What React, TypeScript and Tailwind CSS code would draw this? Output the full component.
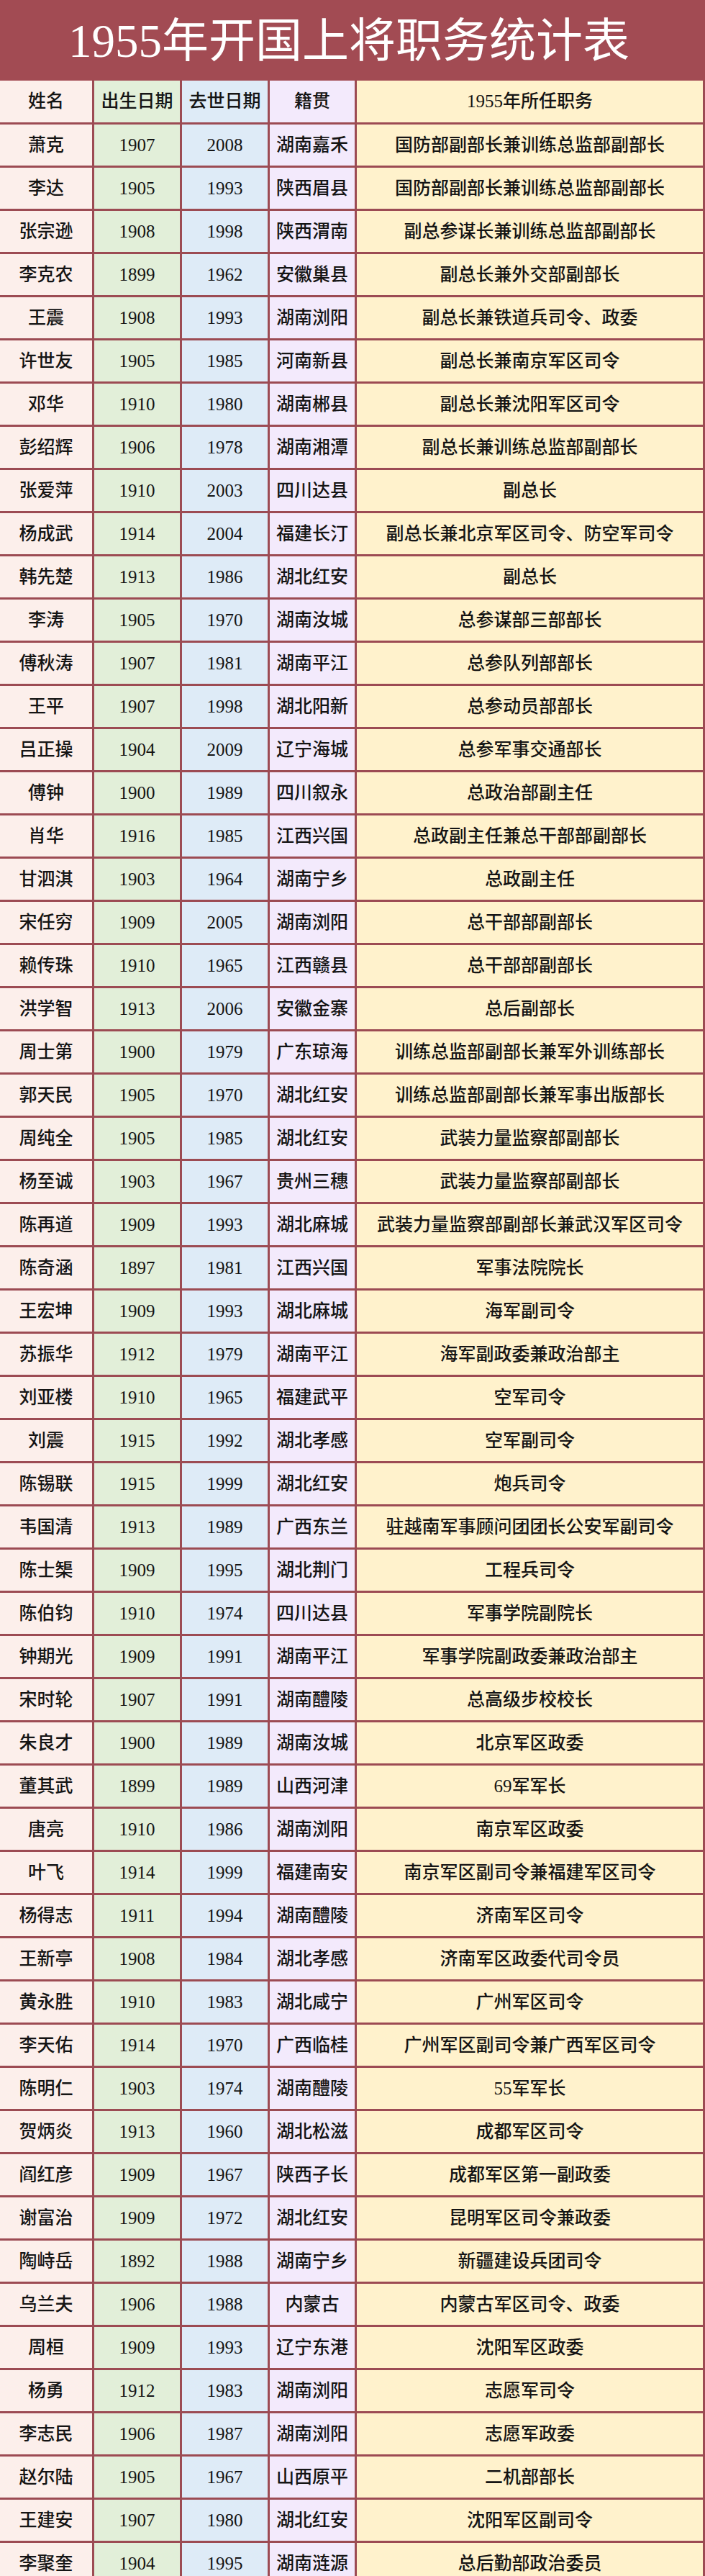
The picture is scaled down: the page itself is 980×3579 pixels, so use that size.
const rows: [string, string, string, string, string][] = [
  ['萧克', '1907', '2008', '湖南嘉禾', '国防部副部长兼训练总监部副部长'],
  ['李达', '1905', '1993', '陕西眉县', '国防部副部长兼训练总监部副部长'],
  ['张宗逊', '1908', '1998', '陕西渭南', '副总参谋长兼训练总监部副部长'],
  ['李克农', '1899', '1962', '安徽巢县', '副总长兼外交部副部长'],
  ['王震', '1908', '1993', '湖南浏阳', '副总长兼铁道兵司令、政委'],
  ['许世友', '1905', '1985', '河南新县', '副总长兼南京军区司令'],
  ['邓华', '1910', '1980', '湖南郴县', '副总长兼沈阳军区司令'],
  ['彭绍辉', '1906', '1978', '湖南湘潭', '副总长兼训练总监部副部长'],
  ['张爱萍', '1910', '2003', '四川达县', '副总长'],
  ['杨成武', '1914', '2004', '福建长汀', '副总长兼北京军区司令、防空军司令'],
  ['韩先楚', '1913', '1986', '湖北红安', '副总长'],
  ['李涛', '1905', '1970', '湖南汝城', '总参谋部三部部长'],
  ['傅秋涛', '1907', '1981', '湖南平江', '总参队列部部长'],
  ['王平', '1907', '1998', '湖北阳新', '总参动员部部长'],
  ['吕正操', '1904', '2009', '辽宁海城', '总参军事交通部长'],
  ['傅钟', '1900', '1989', '四川叙永', '总政治部副主任'],
  ['肖华', '1916', '1985', '江西兴国', '总政副主任兼总干部部副部长'],
  ['甘泗淇', '1903', '1964', '湖南宁乡', '总政副主任'],
  ['宋任穷', '1909', '2005', '湖南浏阳', '总干部部副部长'],
  ['赖传珠', '1910', '1965', '江西赣县', '总干部部副部长'],
  ['洪学智', '1913', '2006', '安徽金寨', '总后副部长'],
  ['周士第', '1900', '1979', '广东琼海', '训练总监部副部长兼军外训练部长'],
  ['郭天民', '1905', '1970', '湖北红安', '训练总监部副部长兼军事出版部长'],
  ['周纯全', '1905', '1985', '湖北红安', '武装力量监察部副部长'],
  ['杨至诚', '1903', '1967', '贵州三穗', '武装力量监察部副部长'],
  ['陈再道', '1909', '1993', '湖北麻城', '武装力量监察部副部长兼武汉军区司令'],
  ['陈奇涵', '1897', '1981', '江西兴国', '军事法院院长'],
  ['王宏坤', '1909', '1993', '湖北麻城', '海军副司令'],
  ['苏振华', '1912', '1979', '湖南平江', '海军副政委兼政治部主'],
  ['刘亚楼', '1910', '1965', '福建武平', '空军司令'],
  ['刘震', '1915', '1992', '湖北孝感', '空军副司令'],
  ['陈锡联', '1915', '1999', '湖北红安', '炮兵司令'],
  ['韦国清', '1913', '1989', '广西东兰', '驻越南军事顾问团团长公安军副司令'],
  ['陈士榘', '1909', '1995', '湖北荆门', '工程兵司令'],
  ['陈伯钧', '1910', '1974', '四川达县', '军事学院副院长'],
  ['钟期光', '1909', '1991', '湖南平江', '军事学院副政委兼政治部主'],
  ['宋时轮', '1907', '1991', '湖南醴陵', '总高级步校校长'],
  ['朱良才', '1900', '1989', '湖南汝城', '北京军区政委'],
  ['董其武', '1899', '1989', '山西河津', '69军军长'],
  ['唐亮', '1910', '1986', '湖南浏阳', '南京军区政委'],
  ['叶飞', '1914', '1999', '福建南安', '南京军区副司令兼福建军区司令'],
  ['杨得志', '1911', '1994', '湖南醴陵', '济南军区司令'],
  ['王新亭', '1908', '1984', '湖北孝感', '济南军区政委代司令员'],
  ['黄永胜', '1910', '1983', '湖北咸宁', '广州军区司令'],
  ['李天佑', '1914', '1970', '广西临桂', '广州军区副司令兼广西军区司令'],
  ['陈明仁', '1903', '1974', '湖南醴陵', '55军军长'],
  ['贺炳炎', '1913', '1960', '湖北松滋', '成都军区司令'],
  ['阎红彦', '1909', '1967', '陕西子长', '成都军区第一副政委'],
  ['谢富治', '1909', '1972', '湖北红安', '昆明军区司令兼政委'],
  ['陶峙岳', '1892', '1988', '湖南宁乡', '新疆建设兵团司令'],
  ['乌兰夫', '1906', '1988', '内蒙古', '内蒙古军区司令、政委'],
  ['周桓', '1909', '1993', '辽宁东港', '沈阳军区政委'],
  ['杨勇', '1912', '1983', '湖南浏阳', '志愿军司令'],
  ['李志民', '1906', '1987', '湖南浏阳', '志愿军政委'],
  ['赵尔陆', '1905', '1967', '山西原平', '二机部部长'],
  ['王建安', '1907', '1980', '湖北红安', '沈阳军区副司令'],
  ['李聚奎', '1904', '1995', '湖南涟源', '总后勤部政治委员'],
];

const colBg = ['bg-[#fcefeb]', 'bg-[#e2efd9]', 'bg-[#deebf7]', 'bg-[#f3eafc]', 'bg-[#fff2cc]'];

function Cell({ text, col, tall }: { text: string; col: number; tall?: boolean }) {
  return (
    <div
      className={`flex items-center justify-center whitespace-nowrap text-[25px] font-medium text-[#141414] ${colBg[col]} ${
        tall ? 'h-[58px]' : 'h-[57px]'
      }`}
    >
      {text}
    </div>
  );
}

export default function App() {
  const header = ['姓名', '出生日期', '去世日期', '籍贯', '1955年所任职务'];

  return (
    <div
      className="w-[980px] bg-[#9c4b53]"
      style={{ fontFamily: '"Liberation Serif", "Noto Sans CJK SC", serif' }}
    >
      {/* Title */}
      <div className="flex h-[112px] items-center justify-center bg-[#a24b53] pt-[2px] pr-[10px] text-[65px] leading-none text-white">
        1955年开国上将职务统计表
      </div>

      {/* Table */}
      <div className="grid grid-cols-[128px_119px_119px_118px_481px] gap-[3px] pr-[3px]">
        {header.map((h, i) => (
          <Cell key={h} text={h} col={i} tall />
        ))}
        {rows.map((r) =>
          r.map((v, i) => <Cell key={r[0] + i} text={v} col={i} />)
        )}
      </div>
    </div>
  );
}
